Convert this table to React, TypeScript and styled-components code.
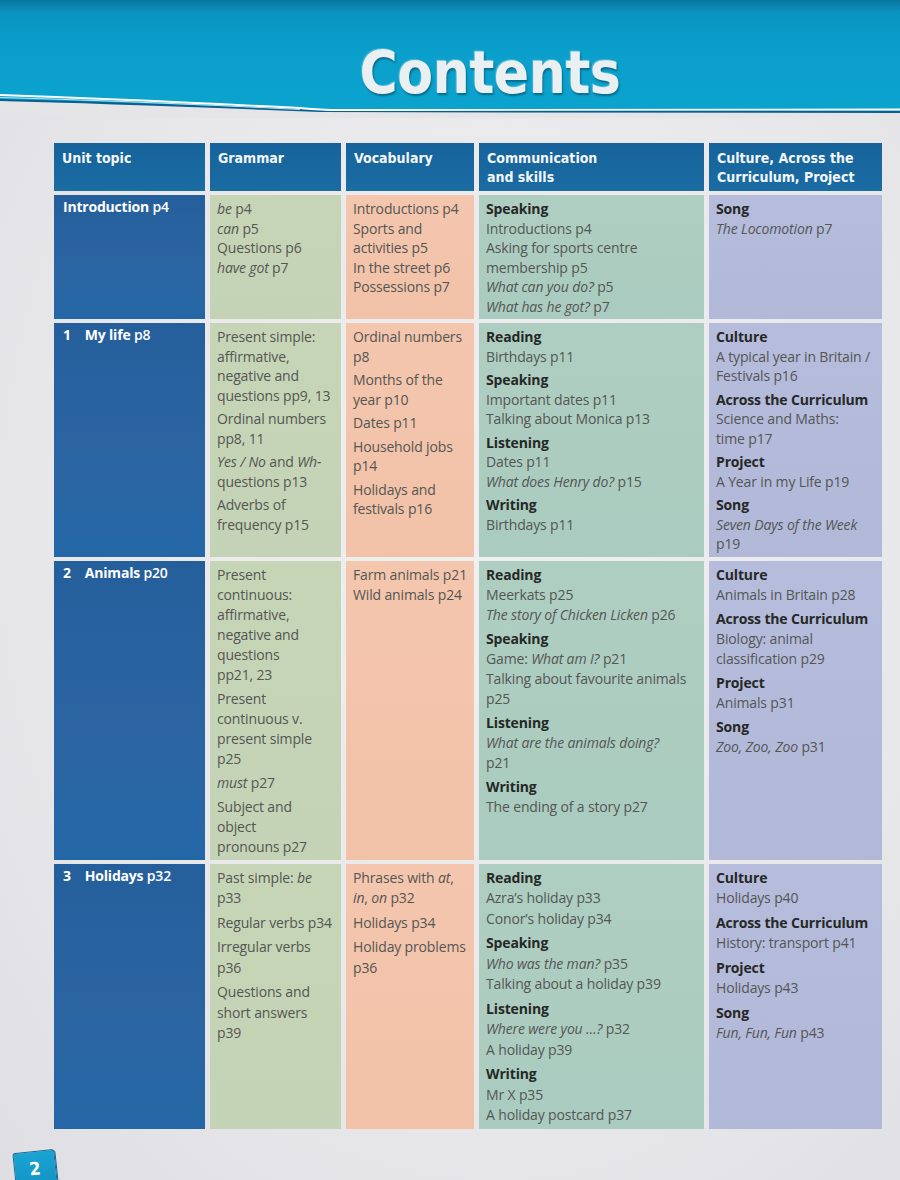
import React from 'react';
import styled, { createGlobalStyle } from 'styled-components';

const Global = createGlobalStyle`
  html, body { margin: 0; padding: 0; }
  body { background: #e7e7ea; font-family: "Open Sans", "Noto Sans", sans-serif; }
`;

type Block = { head?: string; lines: string[] };
type Row = {
  num?: string;
  unit: string;
  page: string;
  tight?: boolean;
  lh: number;
  grammar: Block[];
  vocab: Block[];
  comm: Block[];
  culture: Block[];
};

const rows: Row[] = [
  {
    unit: 'Introduction',
    page: 'p4',
    tight: true,
    lh: 19.5,
    grammar: [
      { lines: ['*be* p4'] },
      { lines: ['*can* p5'] },
      { lines: ['Questions p6'] },
      { lines: ['*have got* p7'] },
    ],
    vocab: [
      { lines: ['Introductions p4'] },
      { lines: ['Sports and', 'activities p5'] },
      { lines: ['In the street p6'] },
      { lines: ['Possessions p7'] },
    ],
    comm: [
      {
        head: 'Speaking',
        lines: [
          'Introductions p4',
          'Asking for sports centre',
          'membership p5',
          '*What can you do?* p5',
          '*What has he got?* p7',
        ],
      },
    ],
    culture: [{ head: 'Song', lines: ['*The Locomotion* p7'] }],
  },
  {
    num: '1',
    unit: 'My life',
    page: 'p8',
    lh: 19.5,
    grammar: [
      { lines: ['Present simple:', 'affirmative,', 'negative and', 'questions pp9, 13'] },
      { lines: ['Ordinal numbers', 'pp8, 11'] },
      { lines: ['*Yes / No* and *Wh-*', 'questions p13'] },
      { lines: ['Adverbs of', 'frequency p15'] },
    ],
    vocab: [
      { lines: ['Ordinal numbers', 'p8'] },
      { lines: ['Months of the', 'year p10'] },
      { lines: ['Dates p11'] },
      { lines: ['Household jobs', 'p14'] },
      { lines: ['Holidays and', 'festivals p16'] },
    ],
    comm: [
      { head: 'Reading', lines: ['Birthdays p11'] },
      { head: 'Speaking', lines: ['Important dates p11', 'Talking about Monica p13'] },
      { head: 'Listening', lines: ['Dates p11', '*What does Henry do?* p15'] },
      { head: 'Writing', lines: ['Birthdays p11'] },
    ],
    culture: [
      { head: 'Culture', lines: ['A typical year in Britain /', 'Festivals p16'] },
      { head: 'Across the Curriculum', lines: ['Science and Maths:', 'time p17'] },
      { head: 'Project', lines: ['A Year in my Life p19'] },
      { head: 'Song', lines: ['*Seven Days of the Week*', 'p19'] },
    ],
  },
  {
    num: '2',
    unit: 'Animals',
    page: 'p20',
    lh: 20,
    grammar: [
      {
        lines: ['Present', 'continuous:', 'affirmative,', 'negative and', 'questions', 'pp21, 23'],
      },
      { lines: ['Present', 'continuous v.', 'present simple', 'p25'] },
      { lines: ['*must* p27'] },
      { lines: ['Subject and', 'object', 'pronouns p27'] },
    ],
    vocab: [{ lines: ['Farm animals p21', 'Wild animals p24'] }],
    comm: [
      { head: 'Reading', lines: ['Meerkats p25', '*The story of Chicken Licken* p26'] },
      {
        head: 'Speaking',
        lines: ['Game: *What am I?* p21', 'Talking about favourite animals', 'p25'],
      },
      { head: 'Listening', lines: ['*What are the animals doing?*', 'p21'] },
      { head: 'Writing', lines: ['The ending of a story p27'] },
    ],
    culture: [
      { head: 'Culture', lines: ['Animals in Britain p28'] },
      { head: 'Across the Curriculum', lines: ['Biology: animal', 'classification p29'] },
      { head: 'Project', lines: ['Animals p31'] },
      { head: 'Song', lines: ['*Zoo, Zoo, Zoo* p31'] },
    ],
  },
  {
    num: '3',
    unit: 'Holidays',
    page: 'p32',
    lh: 20.5,
    grammar: [
      { lines: ['Past simple: *be*', 'p33'] },
      { lines: ['Regular verbs p34'] },
      { lines: ['Irregular verbs', 'p36'] },
      { lines: ['Questions and', 'short answers', 'p39'] },
    ],
    vocab: [
      { lines: ['Phrases with *at*,', '*in*, *on* p32'] },
      { lines: ['Holidays p34'] },
      { lines: ['Holiday problems', 'p36'] },
    ],
    comm: [
      { head: 'Reading', lines: ['Azra\u2019s holiday p33', 'Conor\u2019s holiday p34'] },
      { head: 'Speaking', lines: ['*Who was the man?* p35', 'Talking about a holiday p39'] },
      { head: 'Listening', lines: ['*Where were you \u2026?* p32', 'A holiday p39'] },
      { head: 'Writing', lines: ['Mr X p35', 'A holiday postcard p37'] },
    ],
    culture: [
      { head: 'Culture', lines: ['Holidays p40'] },
      { head: 'Across the Curriculum', lines: ['History: transport p41'] },
      { head: 'Project', lines: ['Holidays p43'] },
      { head: 'Song', lines: ['*Fun, Fun, Fun* p43'] },
    ],
  },
];

const tones = {
  head: 'linear-gradient(180deg, #15639a 0%, #1b6ca3 100%)',
  unit: 'linear-gradient(180deg, #245f9c 0%, #2c64a2 55%, #2467a6 100%)',
  grammar: 'linear-gradient(180deg, #c7d5b7 0%, #c4d3b5 100%)',
  vocab: 'linear-gradient(180deg, #f4c6ad 0%, #f1c2a8 100%)',
  comm: 'linear-gradient(180deg, #afcec2 0%, #aacbbf 100%)',
  culture: 'linear-gradient(180deg, #b6bcdc 0%, #b2b8d8 100%)',
};

type Tone = keyof typeof tones;

const Page = styled.div`
  width: 900px;
  height: 1180px;
  overflow: hidden;
  background: radial-gradient(ellipse at 55% 45%, #f0f0f2 0%, #e8e8eb 60%, #dfdfe3 100%);
`;

const Banner = styled.header`
  position: relative;
  height: 104px;
  display: flex;
  justify-content: center;
  align-items: flex-end;
  padding-left: 80px;
  background: linear-gradient(180deg, #08769e 0px, #0a93bf 12px, #0aa0cb 50%, #0ba2cd 100%);
`;

const Title = styled.h1`
  position: relative;
  z-index: 1;
  margin: 0 0 2px 0;
  font-family: "DejaVu Sans Condensed", "DejaVu Sans", sans-serif;
  font-weight: 700;
  font-size: 58px;
  line-height: 1;
  letter-spacing: -0.5px;
  color: #eaeff1;
  text-shadow: 1px 2px 2px rgba(0, 40, 60, 0.45), -1px -1px 0 rgba(255, 255, 255, 0.25);
`;

const Wave = styled.svg`
  position: absolute;
  left: 0;
  bottom: -14px;
  display: block;
  width: 900px;
  height: 28px;
`;

const Table = styled.div`
  margin: 39px 0 0 54px;
  display: grid;
  grid-template-columns: 151px 131px 128px 225px 173px;
  column-gap: 5px;
  row-gap: 4px;
`;

const Cell = styled.div<{ $tone: Tone; $lh: number; $tight?: boolean }>`
  background: ${(p) => tones[p.$tone]};
  padding: 4px 7px 3px 7px;
  font-size: 14px;
  line-height: ${(p) => p.$lh}px;
  color: #545654;
  letter-spacing: -0.15px;
  display: flex;
  flex-direction: column;
  gap: ${(p) => (p.$tight ? 0 : 4)}px;
`;

const HeadCell = styled.div`
  background: ${tones.head};
  min-height: 47px;
  box-sizing: border-box;
  padding: 6px 7px 4px 8px;
  font-family: "DejaVu Sans Condensed", "DejaVu Sans", sans-serif;
  font-weight: 700;
  font-size: 14px;
  line-height: 19px;
  color: #f4f7fa;
`;

const UnitCell = styled.div`
  background: ${tones.unit};
  padding: 2px 9px 5px 9px;
  color: #ffffff;
  font-weight: 700;
  font-size: 14px;
  line-height: 20px;
  display: flex;
  gap: 14px;
  letter-spacing: -0.2px;
`;

const UnitPage = styled.span`
  font-weight: 600;
`;

const BlockBox = styled.div`
  display: flex;
  flex-direction: column;
`;

const Head = styled.div`
  font-weight: 700;
  color: #262826;
`;

const Line = styled.div`
  white-space: nowrap;
`;

const Footer = styled.footer`
  margin-top: 22px;
  padding-left: 14px;
`;

const PageBadge = styled.div`
  width: 42px;
  height: 34px;
  border-radius: 3px;
  background: linear-gradient(180deg, #1aa3d3 0%, #1395c6 100%);
  border: 1px solid #0c6c96;
  transform: rotate(-6deg);
  color: #ffffff;
  font-family: "DejaVu Sans Condensed", "DejaVu Sans", sans-serif;
  font-weight: 700;
  font-size: 18px;
  line-height: 1;
  display: flex;
  justify-content: center;
  padding-top: 8px;
  box-sizing: border-box;
  box-shadow: 1px 1px 0 #0c6c96;
`;

function Rich({ text }: { text: string }) {
  const parts = text.split('*');
  return (
    <>
      {parts.map((p, i) => (i % 2 === 1 ? <i key={i}>{p}</i> : <React.Fragment key={i}>{p}</React.Fragment>))}
    </>
  );
}

function Column({ tone, blocks, tight, lh }: { tone: Tone; blocks: Block[]; tight?: boolean; lh: number }) {
  return (
    <Cell $tone={tone} $tight={tight} $lh={lh}>
      {blocks.map((b, i) => (
        <BlockBox key={i}>
          {b.head && <Head>{b.head}</Head>}
          {b.lines.map((l, j) => (
            <Line key={j}>
              <Rich text={l} />
            </Line>
          ))}
        </BlockBox>
      ))}
    </Cell>
  );
}

export default function App() {
  return (
    <Page>
      <Global />
      <Banner>
        <Title>Contents</Title>
        <Wave viewBox="0 0 900 28" preserveAspectRatio="none">
          <path d="M0 0 H900 V22 L320 21 C220 17 120 13 0 10 Z" fill="#0ba2cd" />
          <path d="M0 10 C120 13 220 17 320 21 L900 22 V28 H0 Z" fill="#e5e5e8" />
          <path d="M0 10 C120 13 220 17 320 21 L900 22" fill="none" stroke="#0b5f8e" strokeWidth="2.2" />
          <path
            d="M0 5 C120 9 220 14 300 18 C310 19 318 20 340 20 L900 19.5"
            fill="none"
            stroke="#ffffff"
            strokeWidth="1.8"
          />
          <path d="M0 7.5 C110 10.5 210 15 300 19.5" fill="none" stroke="#cdeefa" strokeWidth="0.9" />
        </Wave>
      </Banner>
      <Table>
        <HeadCell>Unit topic</HeadCell>
        <HeadCell>Grammar</HeadCell>
        <HeadCell>Vocabulary</HeadCell>
        <HeadCell>
          Communication
          <br />
          and skills
        </HeadCell>
        <HeadCell>
          Culture, Across the
          <br />
          Curriculum, Project
        </HeadCell>
        {rows.map((r, i) => (
          <React.Fragment key={i}>
            <UnitCell>
              {r.num && <span>{r.num}</span>}
              <span>
                {r.unit} <UnitPage>{r.page}</UnitPage>
              </span>
            </UnitCell>
            <Column tone="grammar" blocks={r.grammar} tight={r.tight} lh={r.lh} />
            <Column tone="vocab" blocks={r.vocab} tight={r.tight} lh={r.lh} />
            <Column tone="comm" blocks={r.comm} tight={r.tight} lh={r.lh} />
            <Column tone="culture" blocks={r.culture} tight={r.tight} lh={r.lh} />
          </React.Fragment>
        ))}
      </Table>
      <Footer>
        <PageBadge>2</PageBadge>
      </Footer>
    </Page>
  );
}
